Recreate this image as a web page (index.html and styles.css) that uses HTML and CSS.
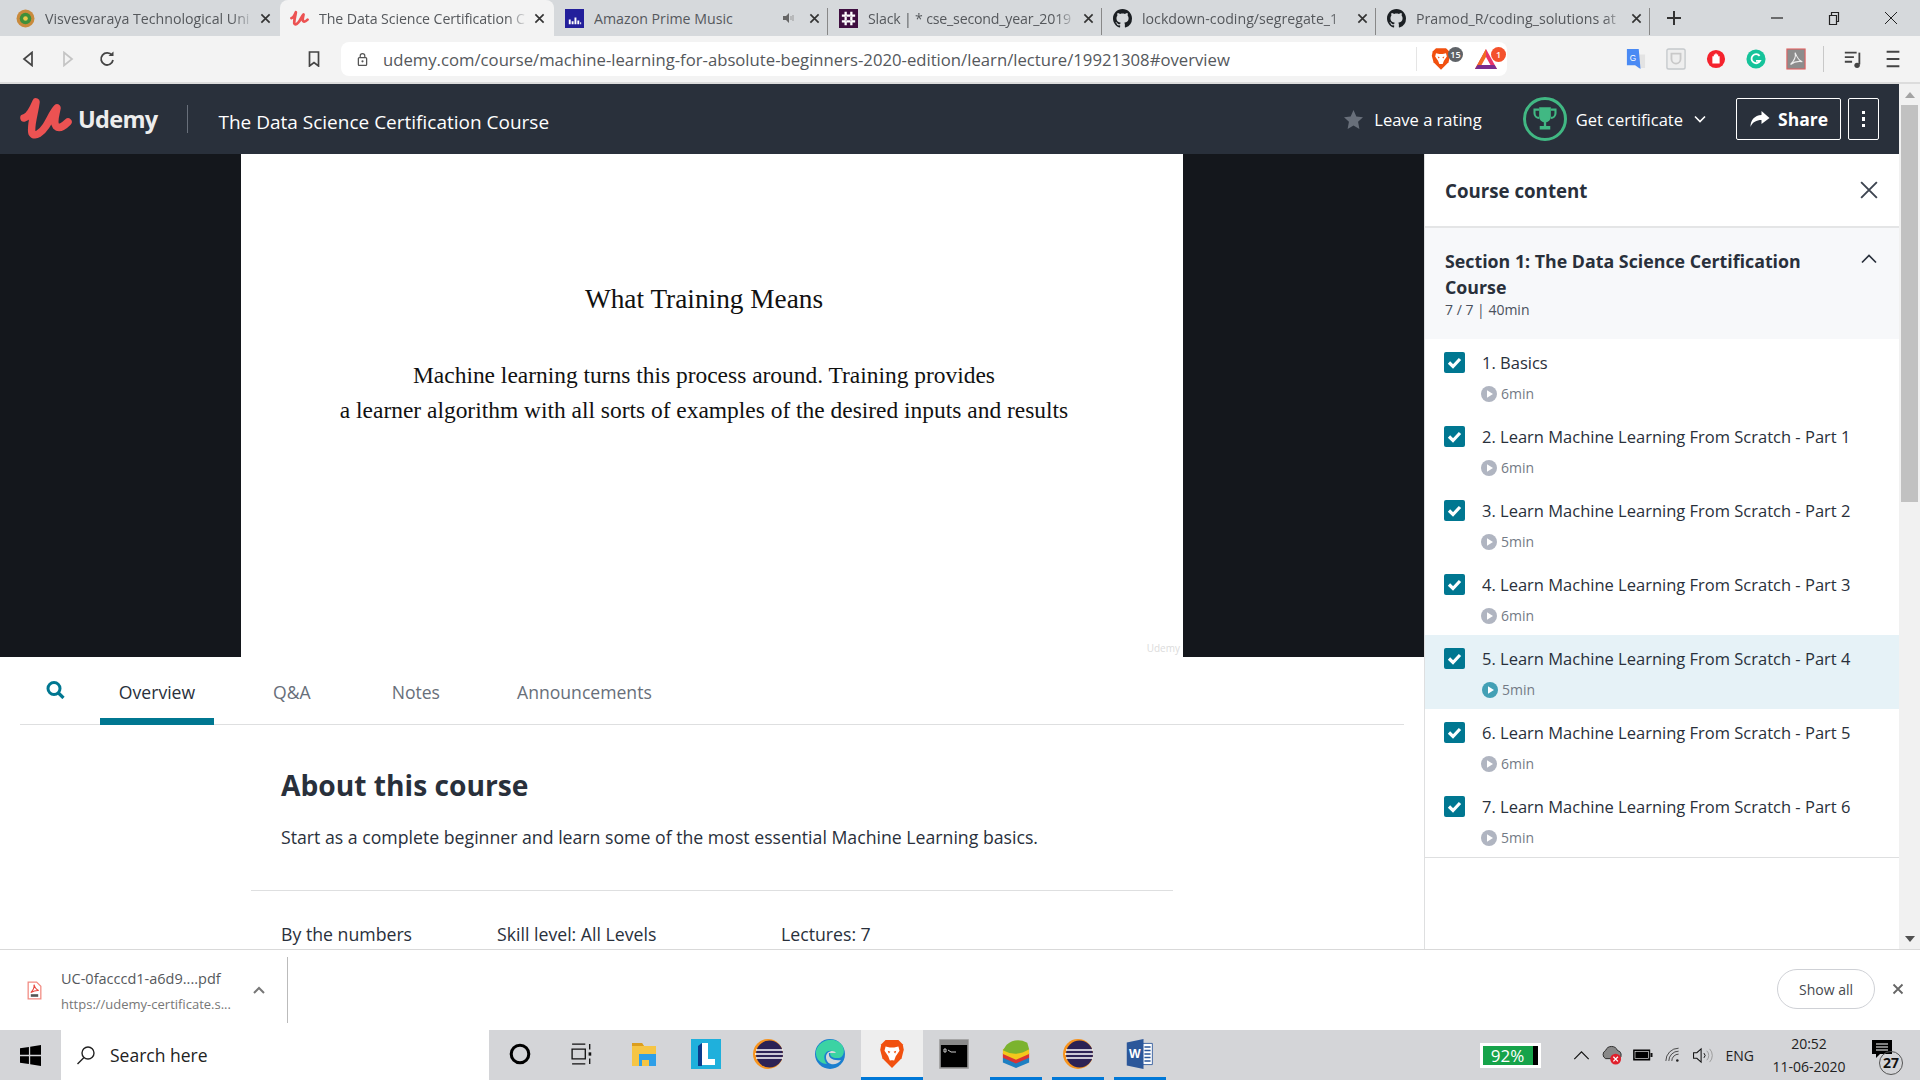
FILE: index.html
```html
<!DOCTYPE html>
<html lang="en">
<head>
    <meta charset="UTF-8">
    <meta name="viewport" content="width=device-width, initial-scale=1.0">
    <title>The Data Science Certification Course</title>
    <link rel="stylesheet" href="styles.css">
</head>
<body>
    <svg class="defs" width="0" height="0">
        <symbol id="u-logo" viewBox="0 0 52 46">
            <path d="M4 22 C9 21 13 13 16 6 C15 16 10 30 12 37 C15 42 22 36 26 30 C30 24 33 16 37 12 C36 18 33 26 36 30 C39 33 44 30 48 26" fill="none" stroke="#ec5252" stroke-width="7.500" stroke-linecap="round" stroke-linejoin="round"/>
        </symbol>
        <symbol id="github" viewBox="0 0 16 16">
            <path fill="#1b1f23" d="M8 0C3.58 0 0 3.58 0 8c0 3.54 2.29 6.53 5.47 7.59.4.07.55-.17.55-.38 0-.19-.01-.82-.01-1.49-2.01.37-2.53-.49-2.69-.94-.09-.23-.48-.94-.82-1.13-.28-.15-.68-.52-.01-.53.63-.01 1.08.58 1.23.82.72 1.21 1.87.87 2.33.66.07-.52.28-.87.51-1.07-1.78-.2-3.64-.89-3.64-3.95 0-.87.31-1.59.82-2.15-.08-.2-.36-1.02.08-2.12 0 0 .67-.21 2.2.82.64-.18 1.32-.27 2-.27.68 0 1.36.09 2 .27 1.53-1.04 2.2-.82 2.2-.82.44 1.1.16 1.92.08 2.12.51.56.82 1.27.82 2.15 0 3.07-1.87 3.75-3.65 3.95.29.25.54.73.54 1.48 0 1.07-.01 1.93-.01 2.2 0 .21.15.46.55.38A8.013 8.013 0 0016 8c0-4.42-3.58-8-8-8z"/>
        </symbol>
        <symbol id="x" viewBox="0 0 12 12">
            <path d="M1.5 1.5 L10.5 10.5 M10.5 1.5 L1.5 10.5" fill="none" stroke="currentColor" stroke-width="1.8"/>
        </symbol>
        <symbol id="x-thin" viewBox="0 0 16 16">
            <path d="M1 1 L15 15 M15 1 L1 15" fill="none" stroke="currentColor" stroke-width="1.7"/>
        </symbol>
        <symbol id="check" viewBox="0 0 21 21">
            <rect width="21" height="21" rx="2" fill="#007791"/>
            <path d="M5 10.5 L9 14.5 L16 7" fill="none" stroke="#fff" stroke-width="3.2"/>
        </symbol>
        <symbol id="play" viewBox="0 0 16 16">
            <circle cx="8" cy="8" r="8" fill="currentColor"/>
            <path d="M6 4.2 L12 8 L6 11.8 Z" fill="#fff"/>
        </symbol>
        <symbol id="brave" viewBox="0 0 24 28">
            <path d="M6 1 H18 L22 5 L23 10 L21 18 L12 27 L3 18 L1 10 L2 5 Z" fill="#f1500f"/>
            <path d="M6 7 L10 8 H14 L18 7 L19 11 L15.5 16 L14 20 H10 L8.5 16 L5 11 Z" fill="#fff"/>
            <path d="M8 11 L10.5 12 L9 13.5 Z M16 11 L13.5 12 L15 13.5 Z M10.5 20 H13.5 L12 22 Z" fill="#f1500f"/>
        </symbol>
        <symbol id="eclipse" viewBox="0 0 30 30">
            <circle cx="15" cy="15" r="15" fill="#f7941e"/>
            <circle cx="16.5" cy="15" r="13.5" fill="#2c2255"/>
            <path d="M3 11 H30 M2 15 H30 M3 19 H30" stroke="#fff" stroke-width="1.7"/>
        </symbol>
    </svg>

    <div class="tabstrip">
        <div class="tab">
            <svg class="favicon" viewBox="0 0 18 18"><circle cx="9" cy="9" r="8.5" fill="#c98a3c"/><circle cx="9" cy="9" r="5.5" fill="#3f8f3a"/><circle cx="9" cy="9" r="2.2" fill="#e9c94a"/></svg>
            <span class="tab-title">Visvesvaraya Technological Uni</span>
            <svg class="tab-close"><use href="#x"/></svg>
        </div>
        <div class="tab tab-active">
            <svg class="favicon"><use href="#u-logo"/></svg>
            <span class="tab-title">The Data Science Certification C</span>
            <svg class="tab-close"><use href="#x"/></svg>
        </div>
        <div class="tab tab-line">
            <svg class="favicon" viewBox="0 0 20 20"><rect width="20" height="20" fill="#231f9b"/><path d="M4 11h2v5H4zM7 13h2v3H7zM10 9h2v7h-2zM13 12h2v4h-2zM16 14h1v2h-1z" fill="#fff"/></svg>
            <span class="tab-title tab-title-short">Amazon Prime Music</span>
            <svg class="tab-sound" viewBox="0 0 12 12"><path d="M0 4h3l3-3v10L3 8H0z" fill="#666"/><path d="M8 4v4M10 3v6" stroke="#999" stroke-width="1"/></svg>
            <svg class="tab-close"><use href="#x"/></svg>
        </div>
        <div class="tab tab-line">
            <svg class="favicon" viewBox="0 0 20 20"><rect width="20" height="20" fill="#3f0e40"/><path d="M7 3v14M13 3v14M3 7h14M3 13h14" stroke="#fff" stroke-width="2.4" stroke-dasharray="4 1"/></svg>
            <span class="tab-title tab-title-tight">Slack | * cse_second_year_2019</span>
            <svg class="tab-close"><use href="#x"/></svg>
        </div>
        <div class="tab tab-line">
            <svg class="favicon"><use href="#github"/></svg>
            <span class="tab-title">lockdown-coding/segregate_1</span>
            <svg class="tab-close"><use href="#x"/></svg>
        </div>
        <div class="tab tab-line tab-last">
            <svg class="favicon"><use href="#github"/></svg>
            <span class="tab-title">Pramod_R/coding_solutions at</span>
            <svg class="tab-close"><use href="#x"/></svg>
        </div>
        <svg class="new-tab" viewBox="0 0 16 16"><path d="M8 1v14M1 8h14" stroke="#333" stroke-width="2"/></svg>
        <div class="window-btns">
            <svg viewBox="0 0 14 14"><path d="M1 7h12" stroke="#222" stroke-width="1.2"/></svg>
            <svg viewBox="0 0 14 14"><path d="M2.5 4.5h7v9h-7zM4.5 4.5v-3h7v9h-2" fill="none" stroke="#222" stroke-width="1.2"/></svg>
            <svg viewBox="0 0 14 14"><path d="M1 1l12 12M13 1L1 13" stroke="#222" stroke-width="1"/></svg>
        </div>
    </div>

    <div class="toolbar">
        <svg class="nav-btn" viewBox="0 0 12 16"><path d="M10 1.5 L2 8 L10 14.5 Z" fill="none" stroke="#444" stroke-width="1.7"/></svg>
        <svg class="nav-btn nav-forward" viewBox="0 0 12 16"><path d="M2 1.5 L10 8 L2 14.5 Z" fill="none" stroke="#c4c4c4" stroke-width="1.7"/></svg>
        <svg class="nav-btn nav-reload" viewBox="0 0 16 16"><path d="M13 4.5 A6 6 0 1 0 14 9" fill="none" stroke="#444" stroke-width="1.8"/><path d="M9.5 5 H14.5 V0.5 Z" fill="#444"/></svg>
        <svg class="nav-btn nav-bookmark" viewBox="0 0 12 16"><path d="M1.5 1h9v14L6 11.5 1.5 15z" fill="none" stroke="#444" stroke-width="1.7"/></svg>
        <div class="address">
            <svg class="lock" viewBox="0 0 12 16"><path d="M3.5 6V4a2.5 2.5 0 0 1 5 0v2" fill="none" stroke="#555" stroke-width="1.3"/><rect x="1.5" y="6" width="9" height="8.5" rx="1" fill="none" stroke="#555" stroke-width="1.4"/><circle cx="6" cy="10" r="1.2" fill="#555"/></svg>
            <span class="url">udemy.com/course/machine-learning-for-absolute-beginners-2020-edition/learn/lecture/19921308#overview</span>
            <div class="address-icons">
                <div class="shield">
                    <svg class="shield-icon"><use href="#brave"/></svg>
                    <span class="count count-gray">15</span>
                </div>
                <div class="shield">
                    <svg class="shield-icon shield-bat" viewBox="0 0 24 24"><path d="M12 2 L23 22 H1 Z" fill="#e8336a"/><path d="M12 2 L1 22 H12 Z" fill="#f26b21"/><path d="M1 22 L3.500 18 H20.500 L23 22 Z" fill="#7a2d8e"/><path d="M12 10 L16.500 18 H7.500 Z" fill="#fff"/></svg>
                    <span class="count count-red">1</span>
                </div>
            </div>
        </div>
        <div class="extensions">
            <svg viewBox="0 0 22 24"><path d="M12 7h9v15h-8z" fill="#e3e3e3"/><path d="M1 1h13l2 22-6-4H1z" fill="#4a8af4"/><text x="4" y="14" font-size="9" fill="#fff" font-family="Liberation Sans">G</text></svg>
            <svg viewBox="0 0 22 24"><rect x="1" y="1" width="20" height="22" rx="2" fill="#eee" stroke="#c5c9cc" stroke-width="1.5"/><path d="M6 6h10v6a5 5 0 0 1-10 0z" fill="none" stroke="#c9c9c9" stroke-width="2"/></svg>
            <svg viewBox="0 0 22 24"><circle cx="11" cy="12" r="10" fill="#f5222d"/><path d="M7 17V9h1.6v-2h1.6v-1h1.6v1h1.6v2h1.6v8z" fill="#fff"/></svg>
            <svg viewBox="0 0 22 24"><circle cx="11" cy="12" r="10.5" fill="#15c39a"/><path d="M15 8.5A5 5 0 1 0 15.5 14H11" fill="none" stroke="#fff" stroke-width="2"/></svg>
            <svg viewBox="0 0 22 24"><rect x="1" y="1" width="20" height="22" fill="#8c8c8c" stroke="#e06060" stroke-width="1.2"/><path d="M5 18 C9 14 11 9 10 5 C12 10 14 14 18 15 C13 14 9 15 5 18 Z" fill="none" stroke="#eee" stroke-width="1.2"/></svg>
            <span class="ext-sep"></span>
            <svg class="ext-music" viewBox="0 0 22 24"><path d="M2 5h13M2 10h10M2 15h8" stroke="#444" stroke-width="2"/><path d="M18 5v13" stroke="#444" stroke-width="2"/><circle cx="15.5" cy="19" r="3" fill="#444"/></svg>
            <svg class="ext-menu" viewBox="0 0 22 24"><path d="M4 4h14M4 12h14M4 20h14" stroke="#444" stroke-width="2"/></svg>
        </div>
    </div>

    <div class="viewport">
        <div class="page">
            <header class="topbar">
                <svg class="logo"><use href="#u-logo"/></svg>
                <span class="brand">Udemy</span>
                <span class="topbar-sep"></span>
                <span class="course-title">The Data Science Certification Course</span>
                <div class="topbar-actions">
                    <svg class="star" viewBox="0 0 20 20"><path d="M10 0 L13 6.8 L20 7.6 L14.8 12.4 L16.2 20 L10 16.2 L3.8 20 L5.2 12.4 L0 7.6 L7 6.8 Z" fill="#686f7a"/></svg>
                    <span class="rating-text">Leave a rating</span>
                    <div class="trophy">
                        <svg viewBox="0 0 24 24"><path d="M7 2h10v8a5 5 0 0 1-10 0z" fill="#41b883"/><path d="M7 4H3v3a4 4 0 0 0 4 4M17 4h4v3a4 4 0 0 1-4 4" fill="none" stroke="#41b883" stroke-width="1.8"/><path d="M11 14h2v4h-2zM7.5 18h9v3h-9z" fill="#41b883"/></svg>
                    </div>
                    <span class="cert-text">Get certificate</span>
                    <svg class="cert-chevron" viewBox="0 0 12 8"><path d="M1 1.5 L6 6.5 L11 1.5" fill="none" stroke="#fff" stroke-width="1.6"/></svg>
                    <button class="share-btn" type="button">
                        <svg viewBox="0 0 20 18"><path d="M12 1 L20 8 L12 14 V10 C7 10 3 12 1 17 C1 10 5 5.5 12 5 Z" fill="#fff"/></svg>
                        Share
                    </button>
                    <button class="more-btn" type="button"><i></i><i></i><i></i></button>
                </div>
            </header>

            <div class="workspace">
                <main class="main-col">
                    <div class="video">
                        <div class="slide">
                            <h2 class="slide-title">What Training Means</h2>
                            <p class="slide-text">Machine learning turns this process around. Training provides<br>a learner algorithm with all sorts of examples of the desired inputs and results</p>
                            <span class="watermark">Udemy</span>
                        </div>
                    </div>
                    <nav class="lecture-tabs">
                        <svg class="tab-search" viewBox="0 0 19 18"><circle cx="8" cy="7.5" r="6" fill="none" stroke="#007791" stroke-width="3"/><path d="M12.5 12 L17.5 17" stroke="#007791" stroke-width="3.2"/></svg>
                        <a class="lecture-tab lecture-tab-on">Overview</a>
                        <a class="lecture-tab lecture-tab-qa">Q&amp;A</a>
                        <a class="lecture-tab">Notes</a>
                        <a class="lecture-tab">Announcements</a>
                    </nav>
                    <section class="about">
                        <h1 class="about-title">About this course</h1>
                        <p class="about-text">Start as a complete beginner and learn some of the most essential Machine Learning basics.</p>
                        <div class="about-divider"></div>
                        <div class="numbers">
                            <span class="numbers-a">By the numbers</span>
                            <span class="numbers-b">Skill level: All Levels</span>
                            <span>Lectures: 7</span>
                        </div>
                    </section>
                </main>

                <aside class="sidebar">
                    <div class="side-head">
                        <span>Course content</span>
                        <svg class="side-close"><use href="#x-thin"/></svg>
                    </div>
                    <div class="section-head">
                        <div>
                            <div class="section-title">Section 1: The Data Science Certification Course</div>
                            <div class="section-meta">7 / 7 | 40min</div>
                        </div>
                        <svg class="section-chevron" viewBox="0 0 16 10"><path d="M1 8.5 L8 1.5 L15 8.5" fill="none" stroke="#29303b" stroke-width="1.7"/></svg>
                    </div>
                    <ul class="lectures">
                        <li class="lecture">
                            <svg class="check"><use href="#check"/></svg>
                            <div><div class="lecture-name">1. Basics</div><div class="lecture-time"><svg class="play"><use href="#play"/></svg>6min</div></div>
                        </li>
                        <li class="lecture">
                            <svg class="check"><use href="#check"/></svg>
                            <div><div class="lecture-name">2. Learn Machine Learning From Scratch - Part 1</div><div class="lecture-time"><svg class="play"><use href="#play"/></svg>6min</div></div>
                        </li>
                        <li class="lecture">
                            <svg class="check"><use href="#check"/></svg>
                            <div><div class="lecture-name">3. Learn Machine Learning From Scratch - Part 2</div><div class="lecture-time"><svg class="play"><use href="#play"/></svg>5min</div></div>
                        </li>
                        <li class="lecture">
                            <svg class="check"><use href="#check"/></svg>
                            <div><div class="lecture-name">4. Learn Machine Learning From Scratch - Part 3</div><div class="lecture-time"><svg class="play"><use href="#play"/></svg>6min</div></div>
                        </li>
                        <li class="lecture lecture-on">
                            <svg class="check"><use href="#check"/></svg>
                            <div><div class="lecture-name">5. Learn Machine Learning From Scratch - Part 4</div><div class="lecture-time"><svg class="play"><use href="#play"/></svg>5min</div></div>
                        </li>
                        <li class="lecture">
                            <svg class="check"><use href="#check"/></svg>
                            <div><div class="lecture-name">6. Learn Machine Learning From Scratch - Part 5</div><div class="lecture-time"><svg class="play"><use href="#play"/></svg>6min</div></div>
                        </li>
                        <li class="lecture">
                            <svg class="check"><use href="#check"/></svg>
                            <div><div class="lecture-name">7. Learn Machine Learning From Scratch - Part 6</div><div class="lecture-time"><svg class="play"><use href="#play"/></svg>5min</div></div>
                        </li>
                    </ul>
                </aside>
            </div>
        </div>
        <div class="scrollbar">
            <svg class="scroll-arrow" viewBox="0 0 10 6"><path d="M0 6 L5 0 L10 6 Z" fill="#a3a3a3"/></svg>
            <div class="scroll-thumb"></div>
            <svg class="scroll-arrow scroll-arrow-down" viewBox="0 0 10 6"><path d="M0 0 L5 6 L10 0 Z" fill="#505050"/></svg>
        </div>
    </div>

    <div class="downloads">
        <svg class="pdf-icon" viewBox="0 0 14 18"><path d="M1 1h8l4 4v12H1z" fill="#fff" stroke="#f28b82" stroke-width="1.2"/><path d="M3.5 11 C5.5 9 7 6 6.5 3.5 C7.5 6.5 9 8.5 11 9 C8.5 8.8 6 9.5 3.5 11 Z" fill="none" stroke="#e8453c" stroke-width="1"/><rect x="3.5" y="12.5" width="7" height="2.5" fill="#555"/></svg>
        <div class="file-info">
            <div class="file-name">UC-0facccd1-a6d9....pdf</div>
            <div class="file-url">https://udemy-certificate.s...</div>
        </div>
        <svg class="file-chevron" viewBox="0 0 12 8"><path d="M1 7 L6 2 L11 7" fill="none" stroke="#777" stroke-width="2"/></svg>
        <span class="file-sep"></span>
        <button class="show-all" type="button">Show all</button>
        <svg class="downloads-close"><use href="#x"/></svg>
    </div>

    <footer class="taskbar">
        <svg class="win-logo" viewBox="0 0 20 20"><path d="M0 3 L8.5 1.8 V9.4 H0 Z M9.7 1.6 L20 0 V9.4 H9.7 Z M0 10.6 H8.5 V18.2 L0 17 Z M9.7 10.6 H20 V20 L9.7 18.4 Z" fill="#000"/></svg>
        <div class="search-box">
            <svg viewBox="0 0 20 20"><circle cx="12" cy="8" r="6" fill="none" stroke="#222" stroke-width="1.4"/><path d="M8 12.5 L1.5 19" stroke="#222" stroke-width="1.5"/></svg>
            <span>Search here</span>
        </div>
        <div class="task-apps">
            <div class="task-app"><svg class="task-icon-sm" viewBox="0 0 20 20"><circle cx="10" cy="10" r="8" fill="none" stroke="#000" stroke-width="2.8"/></svg></div>
            <div class="task-app"><svg class="task-icon-sm" viewBox="0 0 20 20"><path d="M1 1h12M1 19h12M1 5.5h12v9H1zM17 1v5M17 14v5" fill="none" stroke="#111" stroke-width="1.2"/><rect x="16" y="8.5" width="2.4" height="3" fill="#111"/></svg></div>
            <div class="task-app"><svg viewBox="0 0 30 30"><path d="M3 4h10l2 3h12v20H3z" fill="#f6c544"/><path d="M3 4h10l2 3H3z" fill="#dc9e1e"/><path d="M10 15h17v12H10z" fill="#2e9fe8"/><path d="M13 21h7v6h-7z" fill="#f6c544"/></svg></div>
            <div class="task-app"><svg viewBox="0 0 30 30"><rect width="30" height="30" fill="#1fb0dc"/><path d="M11 4h6v16h7v6H11z" fill="#fff"/><path d="M11 4 L7 7 V27 H11 Z" fill="#0a3b8c"/></svg></div>
            <div class="task-app"><svg><use href="#eclipse"/></svg></div>
            <div class="task-app"><svg viewBox="0 3 30 30"><circle cx="15" cy="18" r="15" fill="#1b7fcf"/><path d="M1 15 C4 3 20 0 27 9 C31 15 28 23 22 22 C14 22 14 16 17 15 C11 13 6 21 12 28 C6 28 0 23 1 15 Z" fill="#3bd3a3"/><path d="M11 21 C11 15 19 13 21 17 H14 C13 22 18 25 26 24 C21 31 11 29 11 21 Z" fill="#d5d7da"/></svg></div>
            <div class="task-app task-app-on"><svg><use href="#brave"/></svg></div>
            <div class="task-app"><svg viewBox="0 0 30 30"><rect x="1" y="1" width="28" height="28" fill="#000" stroke="#9a9a9a" stroke-width="1.6"/><path d="M1 1h28v5H1z" fill="#8a8a8a"/><path d="M5 10h2v3H5zM9 11l3 2h5" stroke="#ccc" fill="none"/></svg></div>
            <div class="task-app task-app-open"><svg viewBox="0 0 30 32"><path d="M15 14 L29 20 V25 L15 31 L1 25 V20 Z" fill="#1d7fc2"/><path d="M15 9 L29 15 V20 L15 26 L1 20 V15 Z" fill="#d93434"/><path d="M15 5 L29 11 V16 L15 22 L1 16 V11 Z" fill="#f3c81b"/><path d="M5 6 Q15 -2 27 4 L29 11 Q15 20 1 12 Z" fill="#7bb32e"/></svg></div>
            <div class="task-app task-app-open"><svg><use href="#eclipse"/></svg></div>
            <div class="task-app task-app-open"><svg viewBox="0 0 30 34"><path d="M17 5h12v24H17z" fill="#fff" stroke="#2b579a"/><path d="M20 9h7M20 13h7M20 17h7M20 21h7M20 25h7" stroke="#2b579a" stroke-width="1.6"/><path d="M0 4 L19 0 V34 L0 30 Z" fill="#2b579a"/><text x="2.5" y="22" font-size="14" font-weight="700" fill="#fff" font-family="Liberation Sans">W</text></svg></div>
        </div>
        <div class="tray">
            <div class="battery-meter"><div class="battery-fill">92%</div><div class="battery-rest"></div></div>
            <svg class="tray-chevron" viewBox="0 0 18 10"><path d="M1 9 L9 1 L17 9" fill="none" stroke="#111" stroke-width="1.3"/></svg>
            <svg class="tray-cloud" viewBox="0 0 24 22"><path d="M5 15 A5 5 0 0 1 5 6 A7 7 0 0 1 18 6 A5 5 0 0 1 20 15 Z" fill="#888" stroke="#222"/><circle cx="16" cy="15.5" r="6" fill="#e0202c"/><path d="M13.5 13 L18.5 18 M18.5 13 L13.5 18" stroke="#fff" stroke-width="1.4"/></svg>
            <svg class="tray-battery" viewBox="0 0 20 12"><rect x=".7" y="1" width="16" height="10" fill="#000" stroke="#000"/><rect x="2" y="2.4" width="13.6" height="7.2" fill="#000" stroke="#fff" stroke-width=".6"/><rect x="17.5" y="4" width="2" height="4" fill="#111"/></svg>
            <svg class="tray-wifi" viewBox="0 0 20 18"><path d="M1 16 A15 15 0 0 1 16 1 M4.5 16 A11.5 11.5 0 0 1 16 4.5 M8 16 A8 8 0 0 1 16 8" fill="none" stroke="#333" stroke-width="1"/><circle cx="14.5" cy="15.5" r="1.5" fill="#222"/></svg>
            <svg class="tray-sound" viewBox="0 0 22 18"><path d="M1 6h3.5L9 2v14l-4.5-4H1z" fill="none" stroke="#111" stroke-width="1.1"/><path d="M12 6.5a3.5 3.5 0 0 1 0 5" fill="none" stroke="#111"/><path d="M15 4a7 7 0 0 1 0 10M18 2a10 10 0 0 1 0 14" fill="none" stroke="#999"/></svg>
            <span class="tray-lang">ENG</span>
            <div class="clock"><div>20:52</div><div>11-06-2020</div></div>
            <div class="notify">
                <svg viewBox="0 0 20 18"><path d="M0 0h20v14H8l-4 4v-4H0z" fill="#000"/><path d="M4 4h12M4 7h12M4 10h12" stroke="#fff" stroke-width="1"/></svg>
                <span class="notify-count">27</span>
            </div>
        </div>
    </footer>
</body>
</html>
```

FILE: styles.css
```css
* {
    box-sizing: border-box;
}

html, body {
    margin: 0;
    height: 1080px;
    overflow: hidden;
}

body {
    display: flex;
    flex-direction: column;
    font-family: "Open Sans", sans-serif;
    color: #29303b;
    background: #fff;
}

.defs {
    position: absolute;
}

/* browser tabs */
.tabstrip {
    display: flex;
    align-items: center;
    height: 36px;
    padding-left: 6px;
    background: #d6d9dc;
    flex: none;
}

.tab {
    display: flex;
    align-items: center;
    width: 274px;
    height: 36px;
    padding: 0 8px 0 10px;
    font-size: 14.2px;
    color: #55585c;
    border-right: 1px solid transparent;
}

.tab-active {
    background: #f3f3f3;
    border-radius: 8px 8px 0 0;
    margin-right: 1px;
}

.tab-line {
    position: relative;
}

.tab-line::after {
    content: "";
    position: absolute;
    right: 0;
    top: 8px;
    height: 27px;
    width: 1px;
    background: #888;
}

.favicon {
    width: 19px;
    height: 19px;
    margin-right: 10px;
    flex: none;
}

.tab-title {
    flex: 1;
    padding-top: 1px;
    white-space: nowrap;
    overflow: hidden;
    -webkit-mask-image: linear-gradient(to right, #000 90%, transparent);
    mask-image: linear-gradient(to right, #000 90%, transparent);
}

.tab-title-short {
    -webkit-mask-image: none;
    mask-image: none;
}

.tab-title-tight {
    letter-spacing: -0.2px;
}

.tab-active .tab-title {
    letter-spacing: -0.1px;
}

.tab-sound {
    width: 12px;
    height: 12px;
    margin-right: 8px;
}

.tab-close {
    width: 11px;
    height: 11px;
    margin-left: 6px;
    color: #333;
    flex: none;
}

.new-tab {
    width: 16px;
    height: 16px;
    margin-left: 15px;
}

.window-btns {
    display: flex;
    margin-left: auto;
    gap: 43px;
    padding-right: 22px;
}

.window-btns svg {
    width: 14px;
    height: 14px;
}

/* address bar row */
.toolbar {
    display: flex;
    align-items: center;
    height: 48px;
    flex: none;
    padding: 0 0 0 22px;
    background: #f3f3f3;
    border-bottom: 2px solid #dcdcdc;
}

.nav-btn {
    width: 12px;
    height: 16px;
    flex: none;
}

.nav-forward {
    margin-left: 28px;
}

.nav-reload {
    width: 16px;
    margin-left: 25px;
}

.nav-bookmark {
    margin-left: 193px;
}

.address {
    display: flex;
    align-items: center;
    width: 1166px;
    height: 34px;
    margin-left: 21px;
    padding-left: 16px;
    background: #fff;
    border-radius: 8px;
}

.lock {
    width: 11px;
    height: 15px;
    margin-right: 15px;
}

.url {
    font-size: 16.7px;
    color: #55585c;
    white-space: nowrap;
}

.address-icons {
    display: flex;
    gap: 26px;
    margin-left: auto;
    padding-right: 10px;
    border-left: 1px solid #e5e5e5;
    padding-left: 14px;
}

.shield {
    position: relative;
    width: 20px;
    height: 24px;
}

.shield-icon {
    width: 20px;
    height: 24px;
}

.shield-bat {
    width: 24px;
    margin-left: -3px;
}

.count {
    position: absolute;
    top: 0;
    left: 14px;
    width: 15px;
    height: 15px;
    border-radius: 50%;
    color: #fff;
    font-size: 9px;
    font-weight: 600;
    line-height: 15px;
    text-align: center;
}

.count-gray {
    left: 17px;
    background: #5f6368;
}

.count-red {
    background: #f4512c;
}

.extensions {
    display: flex;
    align-items: center;
    margin-left: 119px;
    gap: 20px;
}

.extensions svg {
    width: 20px;
    height: 22px;
    flex: none;
}

.ext-sep {
    width: 1px;
    height: 26px;
    background: #c8c8c8;
    margin: 0 -4px 0 -3px;
}

.extensions .ext-music {
    margin-left: 3px;
}

/* page */
.viewport {
    display: flex;
    flex: 1;
    min-height: 0;
}

.page {
    display: flex;
    flex-direction: column;
    flex: 1;
    min-width: 0;
}

.scrollbar {
    position: relative;
    width: 21px;
    background: #f1f1f1;
    padding-top: 21px;
}

.scroll-thumb {
    height: 397px;
    margin-left: 2px;
    width: 17px;
    background: #c1c1c1;
}

.scroll-arrow {
    position: absolute;
    top: 8px;
    left: 6px;
    width: 10px;
    height: 6px;
}

.scroll-arrow-down {
    top: auto;
    bottom: 7px;
}

.topbar {
    display: flex;
    align-items: center;
    height: 70px;
    flex: none;
    padding-left: 20px;
    background: #29303b;
    color: #fff;
}

.logo {
    width: 52px;
    height: 46px;
}

.brand {
    margin-left: 6px;
    font-size: 23.5px;
    font-weight: 700;
    letter-spacing: -0.7px;
    color: #ededed;
}

.topbar-sep {
    width: 1px;
    height: 28px;
    margin: 0 30px;
    background: #686f7a;
}

.course-title {
    padding-top: 6px;
    font-size: 19px;
}

.topbar-actions {
    display: flex;
    align-items: center;
    margin-left: auto;
    padding-right: 20px;
}

.star {
    width: 19px;
    height: 19px;
    margin-right: 11px;
}

.rating-text,
.cert-text {
    font-size: 16.5px;
}

.trophy {
    display: flex;
    align-items: center;
    justify-content: center;
    width: 44px;
    height: 44px;
    margin: 0 9px 0 41px;
    border: 3px solid #41b883;
    border-radius: 50%;
}

.trophy svg {
    width: 28px;
    height: 28px;
}

.cert-chevron {
    width: 12px;
    height: 8px;
    margin: 0 30px 0 11px;
}

.share-btn {
    display: flex;
    align-items: center;
    gap: 8px;
    width: 105px;
    height: 42px;
    padding: 0 0 0 12px;
    background: transparent;
    border: 1px solid #fff;
    border-radius: 2px;
    color: #fff;
    font-family: inherit;
    font-size: 17.5px;
    font-weight: 700;
}

.share-btn svg {
    width: 21px;
    height: 18px;
}

.more-btn {
    display: flex;
    flex-direction: column;
    align-items: center;
    justify-content: center;
    gap: 3px;
    width: 31px;
    height: 42px;
    margin-left: 7px;
    background: transparent;
    border: 1px solid #fff;
    border-radius: 2px;
}

.more-btn i {
    width: 3px;
    height: 3.5px;
    background: #fff;
}

.workspace {
    display: flex;
    flex: 1;
    min-height: 0;
}

.main-col {
    width: 1424px;
    flex: none;
    overflow: hidden;
}

.video {
    display: flex;
    justify-content: center;
    height: 503px;
    background: #14171c;
}

.slide {
    position: relative;
    width: 942px;
    padding-right: 16px;
    background: #fff;
    color: #111;
    font-family: "Liberation Serif", serif;
    text-align: center;
}

.slide-title {
    margin: 128px 0 0;
    font-size: 27.3px;
    line-height: 34px;
    font-weight: 400;
}

.slide-text {
    margin: 42px 0 0;
    font-size: 23.45px;
    line-height: 35px;
}

.watermark {
    position: absolute;
    right: 3px;
    bottom: 2px;
    font-family: "Open Sans", sans-serif;
    font-size: 10px;
    color: #dcdcdc;
}

.lecture-tabs {
    display: flex;
    align-items: center;
    height: 68px;
    margin-left: 20px;
    margin-right: 20px;
    border-bottom: 1px solid #dedfe0;
}

.tab-search {
    width: 19px;
    height: 18px;
    margin: 0 0 2px 26px;
    flex: none;
}

.lecture-tab {
    display: flex;
    align-items: center;
    height: 68px;
    padding: 2px 8px 0;
    margin-left: 61px;
    font-size: 17.6px;
    color: #686f7a;
}

.lecture-tab-on {
    color: #29303b;
    width: 114px;
    justify-content: center;
    margin-left: 35px;
    border-bottom: 7px solid #007791;
    padding: 9px 0 0;
}

.lecture-tab-on + .lecture-tab {
    margin-left: 51px;
}

.lecture-tab-qa {
    padding-right: 12px;
}

.about {
    padding: 0 0 0 251px;
}

.about-title {
    margin: 41px 0 0 30px;
    font-size: 28.2px;
    line-height: 38px;
    font-weight: 700;
}

.about-text {
    margin: 20px 0 0 30px;
    font-size: 17.7px;
    line-height: 26px;
}

.about-divider {
    width: 922px;
    height: 1px;
    margin-top: 40px;
    background: #dedfe0;
}

.numbers {
    display: flex;
    margin: 30px 0 0 30px;
    font-size: 17.7px;
    line-height: 26px;
}

.numbers-a {
    width: 216px;
}

.numbers-b {
    width: 284px;
}

/* right hand course list */
.sidebar {
    width: 475px;
    flex: none;
    border-left: 1px solid #dedfe0;
    background: #fff;
}

.side-head {
    display: flex;
    align-items: center;
    justify-content: space-between;
    height: 74px;
    padding: 0 21px 0 20px;
    font-size: 18.7px;
    font-weight: 700;
    border-bottom: 2px solid #e4e5e6;
}

.side-close {
    width: 18px;
    height: 18px;
    color: #3d4450;
}

.section-head {
    display: flex;
    justify-content: space-between;
    height: 111px;
    padding: 20px 22px 0 20px;
    background: #f7f8fa;
}

.section-title {
    width: 385px;
    font-size: 17.8px;
    font-weight: 700;
    line-height: 26px;
}

.section-meta {
    font-size: 14px;
    line-height: 19px;
    color: #4a515d;
}

.section-chevron {
    width: 16px;
    height: 10px;
    margin-top: 6px;
}

.lectures {
    list-style: none;
    margin: 0;
    padding: 0;
    border-bottom: 1px solid #dedfe0;
}

.lecture {
    display: flex;
    height: 74px;
    padding: 13px 0 0 19px;
}

.lecture-on {
    background: #e6f2f7;
}

.check {
    width: 21px;
    height: 21px;
    margin-right: 17px;
    flex: none;
}

.lecture-name {
    font-size: 16.5px;
    line-height: 22px;
    color: #29303b;
}

.lecture-time {
    display: flex;
    align-items: center;
    margin: 10px 0 0 -1px;
    font-size: 14px;
    line-height: 20px;
    color: #737a85;
}

.play {
    width: 16px;
    height: 16px;
    margin-right: 4px;
    color: #b0b5c1;
}

.lecture-on .play {
    color: #43a0b5;
    margin-left: 1px;
}

/* download shelf */
.downloads {
    display: flex;
    align-items: center;
    height: 81px;
    flex: none;
    border-top: 1px solid #d9d9d9;
    background: #fff;
}

.pdf-icon {
    width: 15px;
    height: 19px;
    margin-left: 27px;
}

.file-info {
    margin-left: 19px;
    padding-top: 2px;
    width: 189px;
    color: #55585c;
}

.file-name {
    font-size: 14.5px;
    line-height: 20px;
}

.file-url {
    margin-top: 6px;
    font-size: 13px;
    line-height: 18px;
    color: #777;
}

.file-chevron {
    width: 12px;
    height: 8px;
    margin-left: 3px;
}

.file-sep {
    width: 1px;
    height: 66px;
    margin-left: 22px;
    background: #bbb;
}

.show-all {
    width: 98px;
    height: 40px;
    margin-left: auto;
    margin-bottom: 2px;
    background: #fff;
    border: 1px solid #cfd1d6;
    border-radius: 20px;
    color: #46494e;
    font-family: inherit;
    font-size: 14px;
}

.downloads-close {
    width: 12px;
    height: 12px;
    margin: 0 16px 2px 17px;
    color: #666;
}

/* windows taskbar */
.taskbar {
    display: flex;
    align-items: center;
    height: 50px;
    flex: none;
    background: #d4d5d8;
}

.win-logo {
    width: 21px;
    height: 21px;
    margin-left: 20px;
}

.search-box {
    display: flex;
    align-items: center;
    width: 428px;
    height: 50px;
    margin-left: 20px;
    padding-left: 15px;
    background: #fff;
    font-size: 17.5px;
    color: #222;
}

.search-box svg {
    width: 20px;
    height: 20px;
    margin-right: 14px;
}

.task-apps {
    display: flex;
}

.task-app {
    display: flex;
    align-items: center;
    justify-content: center;
    width: 62px;
    height: 50px;
    border-bottom: 3px solid transparent;
}

.task-app svg {
    width: 30px;
    height: 30px;
}

.task-app .task-icon-sm {
    width: 22px;
    height: 22px;
}

.task-app-on {
    background: #eee;
    border-bottom-color: #0078d7;
}

.task-app-open {
    position: relative;
}

.task-app-open::after {
    content: "";
    position: absolute;
    left: 5px;
    right: 5px;
    bottom: -3px;
    height: 3px;
    background: #0078d7;
}

.tray {
    display: flex;
    align-items: center;
    margin-left: auto;
    padding-right: 20px;
}

.battery-meter {
    display: flex;
    width: 61px;
    height: 25px;
    padding: 3px;
    background: #fff;
    margin-right: 32px;
}

.battery-fill {
    width: 50px;
    background: #16a34a;
    color: #fff;
    font-size: 17px;
    line-height: 19px;
    text-align: center;
}

.battery-rest {
    width: 5px;
    background: #000;
}

.tray-chevron {
    width: 17px;
    height: 9px;
}

.tray-cloud {
    width: 22px;
    height: 20px;
    margin-left: 11px;
}

.tray-battery {
    width: 20px;
    height: 12px;
    margin-left: 10px;
}

.tray-wifi {
    width: 17px;
    height: 16px;
    margin-left: 12px;
}

.tray-sound {
    width: 22px;
    height: 17px;
    margin-left: 10px;
}

.tray-lang {
    margin-left: 12px;
    font-size: 14px;
    color: #222;
}

.clock {
    width: 76px;
    margin-left: 17px;
    font-size: 14px;
    line-height: 23px;
    text-align: center;
    color: #222;
}

.notify {
    position: relative;
    width: 28px;
    height: 30px;
    margin-left: 25px;
}

.notify svg {
    width: 20px;
    height: 18px;
}

.notify-count {
    position: absolute;
    left: 7px;
    top: 11px;
    width: 24px;
    height: 24px;
    border: 1px solid #555;
    border-radius: 50%;
    font-size: 14px;
    font-weight: 700;
    line-height: 21px;
    text-align: center;
    color: #111;
}
```
